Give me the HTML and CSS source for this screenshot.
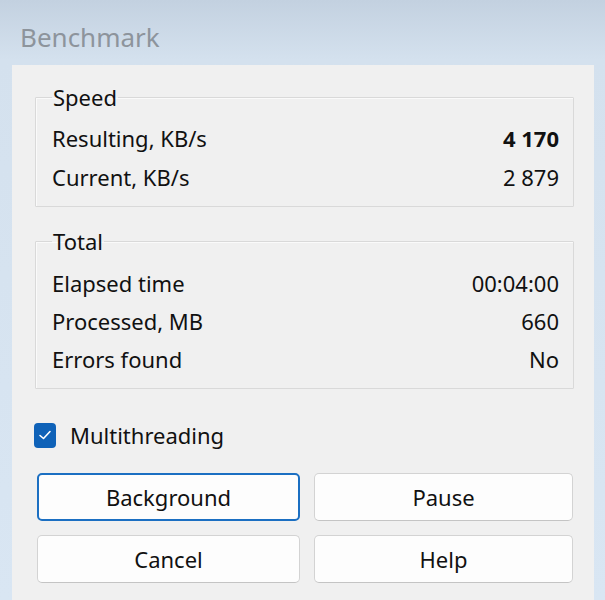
FILE: index.html
```html
<!DOCTYPE html>
<html>
<head>
    <title>Benchmark</title>
    <link rel="stylesheet" href="styles.css">
</head>
<body>
    <header class="title-bar">Benchmark</header>
    <div class="panel">
        <fieldset class="group group-speed">
            <legend>Speed</legend>
            <div class="row"><span>Resulting, KB/s</span><strong>4 170</strong></div>
            <div class="row"><span>Current, KB/s</span><span>2 879</span></div>
        </fieldset>
        <fieldset class="group group-total">
            <legend>Total</legend>
            <div class="row"><span>Elapsed time</span><span>00:04:00</span></div>
            <div class="row"><span>Processed, MB</span><span>660</span></div>
            <div class="row"><span>Errors found</span><span>No</span></div>
        </fieldset>
        <label class="check">
            <span class="check-box">
                <svg width="14" height="12" viewBox="0 0 14 12">
                    <path d="M2 6.5 L5.5 9.5 L12 2.5" fill="none" stroke="#fff" stroke-width="1.6" stroke-linecap="round" stroke-linejoin="round"/>
                </svg>
            </span>
            Multithreading
        </label>
        <div class="buttons">
            <button class="btn btn-default">Background</button>
            <button class="btn">Pause</button>
            <button class="btn">Cancel</button>
            <button class="btn">Help</button>
        </div>
    </div>
</body>
</html>
```

FILE: styles.css
```css
body {
    margin: 0;
    padding: 0;
    font-family: "Noto Sans", "Open Sans", sans-serif;
    font-size: 22px;
    color: #111;
    background: linear-gradient(#c3d1e0 0, #d4e1ee 60px, #d9e6f3 100%);
    height: 600px;
    overflow: hidden;
}
.title-bar {
    height: 65px;
    box-sizing: border-box;
    padding: 22px 0 0 20px;
    font-size: 26px;
    line-height: 30px;
    color: #8d949c;
}
.panel {
    margin: 0 11px 0 12px;
    height: 535px;
    box-sizing: border-box;
    padding: 20px 20px 0 23px;
    background-color: #f0f0f0;
}
.group {
    margin: 0;
    padding: 0 14px 0 16px;
    border: 1px solid #d9d9d9;
    border-radius: 1px;
    box-shadow: inset 1px 1px 0 #fafafa;
}
.group legend {
    padding: 0 1px;
    line-height: 24px;
}
.group-speed {
    padding-top: 9px;
    padding-bottom: 10px;
}
.group-total {
    margin-top: 22px;
    padding-top: 11px;
    padding-bottom: 10px;
}
.row {
    display: flex;
    justify-content: space-between;
    align-items: center;
    height: 38px;
}
.group-speed .row {
    height: 39px;
}
.row strong {
    font-weight: 700;
}
.check {
    display: flex;
    align-items: center;
    gap: 14px;
    margin-top: 32px;
    height: 28px;
}
.check-box {
    display: flex;
    align-items: center;
    justify-content: center;
    width: 22px;
    height: 25px;
    margin-left: -1px;
    border-radius: 4px;
    background-color: #0f62b8;
}
.buttons {
    display: grid;
    grid-template-columns: 263px 259px;
    grid-auto-rows: 48px;
    column-gap: 14px;
    row-gap: 14px;
    margin-top: 24px;
    margin-left: 2px;
}
.btn {
    font-family: inherit;
    font-size: 22px;
    color: #111;
    background-color: #fdfdfd;
    border: 1px solid #d3d3d3;
    border-bottom-color: #c4c4c4;
    border-radius: 5px;
}
.btn-default {
    border: 2px solid #1b6fc2;
}
```
